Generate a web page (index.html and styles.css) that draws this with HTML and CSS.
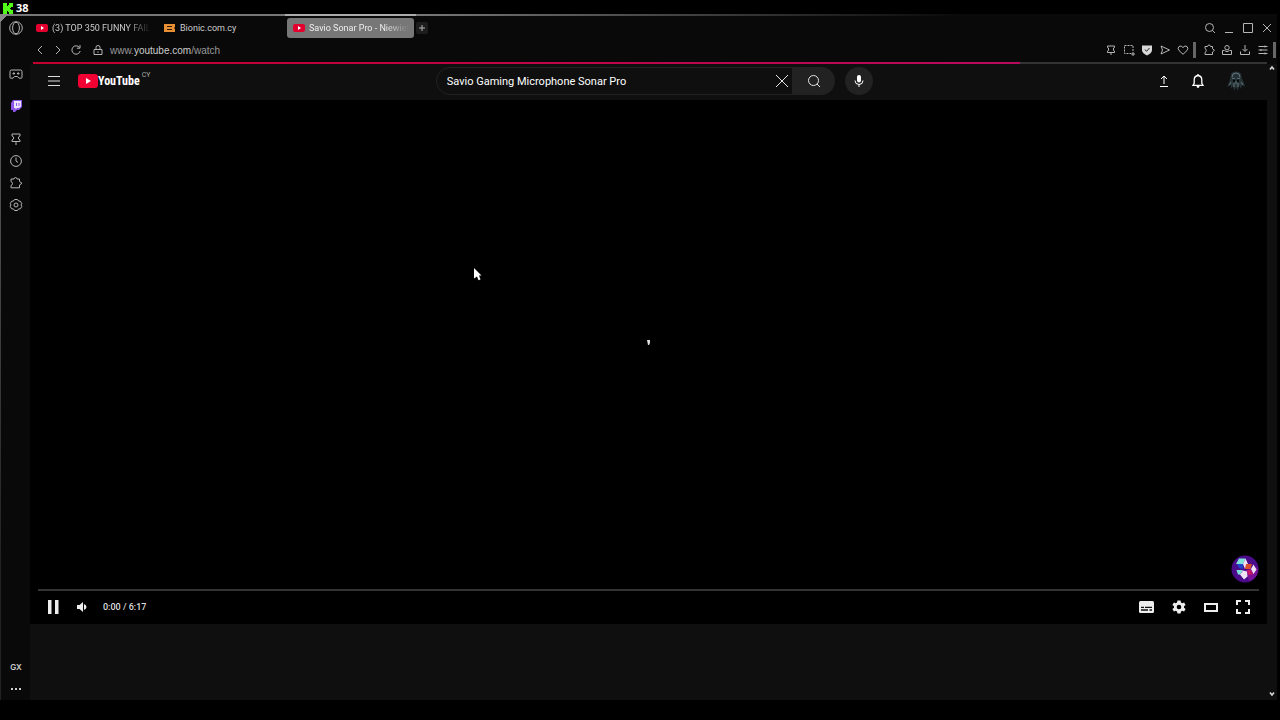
FILE: index.html
```html
<!DOCTYPE html>
<html lang="en">
<head>
  <meta charset="UTF-8">
  <meta name="viewport" content="width=device-width, initial-scale=1.0">
  <title>Savio Sonar Pro - YouTube</title>
  <link rel="stylesheet" href="styles.css">
</head>
<body>
  <div class="fps">
    <svg width="10" height="11" viewBox="0 0 10 11"><path fill="#53fc18" d="M0 0h4v3h1V2h1V0h4v4H8v1H7v1h1v1h2v4H6V9H5V8H4v3H0z"/></svg>
    <span>38</span>
  </div>

  <div class="window">
    <nav class="sidebar">
      <a href="#" class="opera" aria-label="Opera menu"><svg width="14" height="14" viewBox="0 0 14 14"><circle cx="7" cy="7" r="6.3"/><ellipse cx="7" cy="7" rx="3.4" ry="5.8"/></svg></a>
      <a href="#" class="corner" aria-label="GX Corner"><svg width="14" height="14" viewBox="0 0 14 14"><path d="M2.500 3h9q1.500 0 1.500 1.500v6q0 .7-.8.7H10L8.500 9.500h-3L4 11.200H1.800q-.8 0-.8-.7v-6Q1 3 2.500 3z"/><path d="M4 6h1.500v1H4zM8.500 6H10v1H8.500z"/></svg></a>
      <a href="#" class="twitch" aria-label="Twitch"><svg width="12" height="12" viewBox="0 0 12 12"><path fill="#8d55ea" stroke="none" d="M3 0h9v7l-3 3H7l-2 2H3v-2H1V3z"/><path fill="#eee6ff" stroke="none" d="M4 1h7v5.500L9 8H7L5.500 9.500V8H4z"/><path stroke="#8d55ea" d="M6.500 3v3M9 3v3"/></svg></a>
      <a href="#" aria-label="Pinboards"><svg width="14" height="14" viewBox="0 0 14 14"><path d="M3 2h8v2L9.500 5v2L11 8v1.500H3V8l1.500-1V5L3 4zM7 9.500V13"/></svg></a>
      <a href="#" aria-label="History"><svg width="14" height="14" viewBox="0 0 14 14"><circle cx="7" cy="7" r="5.400"/><path d="M7 3.500V7l2 1.500"/></svg></a>
      <a href="#" aria-label="Extensions"><svg width="14" height="14" viewBox="0 0 14 14"><path d="M2 3h3q.2-1.500 1.500-1.500T8 3h2.500v2.500L13 7.300 10.500 9v2.800H2V9.500q1.500-.5 1.500-2T2 5.500z"/></svg></a>
      <a href="#" aria-label="Settings"><svg width="14" height="14" viewBox="0 0 14 14"><path d="M5.500 1.500h3l1 1.500 2 .3 1.300 2.400L12 7l.8 1.300-1.300 2.400-2 .3-1 1.500h-3l-1-1.500-2-.3-1.300-2.400L2 7l-.8-1.300 1.300-2.400 2-.3z"/><circle cx="7" cy="7" r="2"/></svg></a>
      <a href="#" class="gx">GX</a>
      <a href="#" aria-label="Sidebar setup"><svg width="10" height="4" viewBox="0 0 10 4"><path fill="#ccc" stroke="none" d="M0 1h2v2H0zM4 1h2v2H4zM8 1h2v2H8z"/></svg></a>
    </nav>

    <div class="browser">
      <div class="tab-bar">
        <button class="tab">
          <svg width="12" height="8" viewBox="0 0 12 8"><rect width="12" height="8" rx="2" fill="#e3002f"/><path fill="#fff" d="M5 2l3 2-3 2z"/></svg>
          <span>(3) TOP 350 FUNNY FAIL</span>
        </button>
        <button class="tab">
          <svg width="12" height="8" viewBox="0 0 12 8"><path fill="#e89033" d="M0 0h11v3l-1 1 1 1v3H0z"/><path stroke="#2d1b08" d="M3 2.500h5M3 5.500h5"/></svg>
          <span>Bionic.com.cy</span>
        </button>
        <button class="tab active">
          <svg width="12" height="8" viewBox="0 0 12 8"><rect width="12" height="8" rx="2" fill="#e3002f"/><path fill="#fff" d="M5 2l3 2-3 2z"/></svg>
          <span>Savio Sonar Pro - Niewiel</span>
        </button>
        <button class="new-tab" aria-label="New tab"><svg width="8" height="8" viewBox="0 0 8 8"><path d="M4 1v6M1 4h6"/></svg></button>
        <div class="window-buttons">
          <button aria-label="Search tabs"><svg width="12" height="12" viewBox="0 0 12 12"><circle cx="5.500" cy="5.500" r="4"/><path d="M8.500 8.500L11 11"/></svg></button>
          <button aria-label="Minimize"><svg width="12" height="12" viewBox="0 0 12 12"><path d="M2 10.500h8"/></svg></button>
          <button aria-label="Maximize"><svg width="12" height="12" viewBox="0 0 12 12"><path d="M1.500 1.500h9v9h-9z"/></svg></button>
          <button aria-label="Close"><svg width="12" height="12" viewBox="0 0 12 12"><path d="M2 2l8 8M10 2l-8 8"/></svg></button>
        </div>
      </div>

      <div class="address-bar">
        <button aria-label="Back"><svg width="12" height="12" viewBox="0 0 12 12"><path d="M8 2L4 6l4 4"/></svg></button>
        <button aria-label="Forward"><svg width="12" height="12" viewBox="0 0 12 12"><path d="M4 2l4 4-4 4"/></svg></button>
        <button aria-label="Reload"><svg width="12" height="12" viewBox="0 0 12 12"><path d="M9.500 3.500A4.200 4.200 0 1 0 10.200 7M10 1v3.200H6.800"/></svg></button>
        <svg class="lock" width="12" height="12" viewBox="0 0 12 12"><path d="M2 5.500h8v5H2zM4 5.500V3.300q0-1.800 2-1.800t2 1.800v2.200M6 7.300v1.500"/></svg>
        <a class="url" href="#">www.<b>youtube.com</b>/watch</a>
        <div class="tools">
          <button aria-label="Pin"><svg width="12" height="12" viewBox="0 0 12 12"><path d="M2.500 2h7v1.500L8.500 4v2.500l1 .5v1.500h-7V7l1-.5V4l-1-.5zM6 8.500V11"/></svg></button>
          <button aria-label="Snapshot"><svg width="12" height="12" viewBox="0 0 12 12"><path stroke-dasharray="2 1" d="M10 7V1.500H1.500v8H8"/><path d="M10 8v4M8 10h4"/></svg></button>
          <button aria-label="Ad blocker"><svg width="12" height="12" viewBox="0 0 12 12"><path fill="#d8d8d8" stroke="none" d="M1 1.500h10V6q0 3-5 5.500Q1 9 1 6z"/><path stroke="#222" d="M4 5.500L5.500 7.300 8.500 4"/></svg></button>
          <button aria-label="My Flow"><svg width="12" height="12" viewBox="0 0 12 12"><path d="M2 2l8.500 4L2 10l1.500-4z"/></svg></button>
          <button aria-label="Bookmark"><svg width="12" height="12" viewBox="0 0 12 12"><path d="M6 10.300L2 6.500Q.2 4.200 2 2.500 4.200 1 6 3.500 7.800 1 10 2.500q1.800 1.700 0 4z"/></svg></button>
          <i></i>
          <button aria-label="Extensions"><svg width="12" height="12" viewBox="0 0 12 12"><path d="M2 2.500h2.500Q4.700 1 6 1t1.500 1.500H9.500v2.200L11.500 6.300 9.500 8v2.500H2v-2q1.300-.6 1.300-2T2 4.500z"/></svg></button>
          <button aria-label="Profile"><svg width="12" height="12" viewBox="0 0 12 12"><circle cx="6" cy="3.700" r="2.200"/><path d="M3.300 6.500H1.500v4h9v-4H8.700M3.500 6.500q2.500 2.500 5 0"/></svg></button>
          <button aria-label="Downloads"><svg width="12" height="12" viewBox="0 0 12 12"><path d="M6 1v6M3.500 5L6 7.500 8.500 5M1.500 7.500v3h9v-3"/></svg></button>
          <button aria-label="Easy setup"><svg width="12" height="12" viewBox="0 0 12 12"><path d="M1.500 2.500h9M1.500 6h9M1.500 9.500h9M8 1.500v2M4 5v2M8 8.500v2"/></svg></button>
          <i></i>
        </div>
      </div>

      <div class="load-line"></div>

      <div class="viewport">
        <main class="page">
          <header class="masthead">
            <div class="start">
              <button aria-label="Guide"><svg width="14" height="12" viewBox="0 0 14 12"><path stroke="#ddd" d="M1 1.500h12M1 6h12M1 10.500h12"/></svg></button>
              <a class="logo" href="#">
                <svg width="20" height="14" viewBox="0 0 20 14"><rect width="20" height="14" rx="3" fill="#f00033"/><path fill="#fff" d="M8 4l5 3-5 3z"/></svg>
                <span>YouTube</span><sup>CY</sup>
              </a>
            </div>
            <form class="search">
              <div class="search-box">
                <input type="text" aria-label="Search" value="Savio Gaming Microphone Sonar Pro">
                <button type="reset" aria-label="Clear"><svg width="14" height="14" viewBox="0 0 14 14"><path stroke="#e5e5e5" d="M1 1l12 12M13 1L1 13"/></svg></button>
              </div>
              <button class="search-button" type="button" aria-label="Search"><svg width="14" height="14" viewBox="0 0 14 14"><circle cx="6.500" cy="6.500" r="5" stroke="#e5e5e5"/><path stroke="#e5e5e5" d="M10 10l3 3"/></svg></button>
              <button class="mic" type="button" aria-label="Voice search"><svg width="12" height="14" viewBox="0 0 12 14"><rect x="4" y="1" width="4" height="7.500" rx="2" fill="#fff"/><path stroke="#fff" d="M2 6.500q0 4 4 4t4-4M6 10.500V13"/></svg></button>
            </form>
            <div class="end">
              <button aria-label="Create"><svg width="12" height="14" viewBox="0 0 12 14"><path stroke="#fff" d="M6 10V2M3 5l3-3 3 3M2 12.500h8"/></svg></button>
              <button aria-label="Notifications"><svg width="14" height="16" viewBox="0 0 14 16"><path stroke="#fff" stroke-width="1.300" d="M2 12.300h10l-1.200-2V7Q10.800 3 7 2.500 3.200 3 3.200 7v3.300z"/><path fill="#fff" d="M5.500 13h3q-.2 2-1.500 2t-1.500-2zM6.300 1h1.400v2H6.300z"/></svg></button>
              <button aria-label="Account"><svg width="20" height="20" viewBox="0 0 20 20"><path fill="#263236" d="M5 3q1-2.500 5-2.500T15 3l1 5 2 4 1 4-3-2-1 4-2-4-1 6-2-4-2 4-1-5-2 3v-4l-4 2 2-4 1-4z"/><path stroke="#64767b" d="M6 6q0-4 4-4t4 4M6 7l3 1M14 7l-3 1M8 12v4M12 12v4M5 11l-2 3M15 11l2 3M10 10v3"/><path fill="#06090a" d="M7 8.500h2V11H7zM11 8.500h2V11h-2z"/></svg></button>
            </div>
          </header>

          <section class="player">
            <svg class="spinner" width="4" height="6" viewBox="0 0 4 6"><path fill="#ddd" d="M0 0h3v3L2 5H1z"/></svg>
            <div class="channel">
              <svg width="28" height="28" viewBox="0 0 28 28"><circle cx="14" cy="14" r="13.500" fill="#4b0c8c"/><path fill="#78109a" d="M15 15l12-3q1 11-9 14z"/><path fill="#7fe3dc" d="M8 3.500h6.500L12 9H5zM5.500 15H12l-3 4.500H7z"/><path fill="#2143c8" d="M6 9h6v5L8 13z"/><path fill="#eee4f5" d="M14.500 3.500L17 9l-3 5-2-5zM9 19.500l3-4 4 1 .5 5-3.500 3zM22.500 9.500l3 5-3 4.500-2.500-5z"/><path fill="#d9502d" d="M15 9h6l-1.500 5H14z"/><path fill="#c51568" d="M16 15h4l2 4.500-5 .5z"/></svg>
            </div>
            <progress value="0" max="377" aria-label="Seek"></progress>
            <div class="controls">
              <button aria-label="Pause"><svg width="12" height="14" viewBox="0 0 12 14"><path fill="#eee" d="M1 0h3.500v14H1zM8 0h3.500v14H8z"/></svg></button>
              <button aria-label="Mute"><svg width="12" height="12" viewBox="0 0 12 12"><path fill="#eee" d="M1 4h2.500L7 1v10L3.500 8H1zM8 3q2.500 1 2.500 3T8 9z"/></svg></button>
              <span class="time">0:00 / 6:17</span>
              <div class="right">
                <button aria-label="Subtitles"><svg width="16" height="12" viewBox="0 0 16 12"><rect width="15" height="12" rx="1.500" fill="#eee"/><path stroke="#111" stroke-width="1.300" d="M2 6.300h3M6 6.300h7M2 9h7M10.500 9H13"/></svg></button>
                <button aria-label="Settings"><svg width="14" height="14" viewBox="0 0 14 14"><path fill="#eee" fill-rule="evenodd" d="M5.500.5h3L9 2.500l1.200.7 1.900-.7 1.500 2.500L12 6.300v1.400L13.600 9l-1.500 2.500-1.900-.7-1.200.7-.5 2h-3l-.5-2-1.200-.7-1.900.7L.4 9 2 7.700V6.300L.4 5l1.500-2.500 1.900.7L5 2.500zM7 4.700a2.300 2.300 0 1 0 0 4.600 2.300 2.300 0 0 0 0-4.600z"/></svg></button>
                <button aria-label="Theater mode"><svg width="14" height="10" viewBox="0 0 14 10"><path stroke="#eee" stroke-width="2" d="M1 2h12v7H1z"/></svg></button>
                <button aria-label="Full screen"><svg width="14" height="14" viewBox="0 0 14 14"><path stroke="#eee" stroke-width="2" d="M1 5V1h4M9 1h4v4M13 9v4H9M5 13H1V9"/></svg></button>
              </div>
            </div>
          </section>
        </main>
        <div class="scrollbar">
          <svg width="6" height="6" viewBox="0 0 6 6"><path stroke="#ddd" stroke-width="1.500" d="M1 4.500l2-2.500 2 2.500"/></svg>
          <svg width="6" height="6" viewBox="0 0 6 6"><path stroke="#ddd" stroke-width="1.500" d="M1 1.500L3 4l2-2.500"/></svg>
        </div>
      </div>
    </div>
  </div>

  <svg class="cursor" width="8" height="13" viewBox="0 0 8 13"><path fill="#fff" d="M0 0l7.500 7.500H5l1.500 4-2 .7L3 8.500l-3 2z"/></svg>
</body>
</html>
```

FILE: styles.css
```css
* {
  box-sizing: border-box;
}

body {
  margin: 0;
  padding-bottom: 20px;
  height: 100vh;
  display: flex;
  flex-direction: column;
  background: #000;
  color: #ccc;
  font-family: Roboto, "Liberation Sans", sans-serif;
  overflow: hidden;
}

svg {
  display: block;
  flex: none;
  fill: none;
}

button {
  display: flex;
  align-items: center;
  justify-content: center;
  margin: 0;
  padding: 0;
  border: none;
  background: none;
  color: inherit;
  font: inherit;
}

a {
  color: inherit;
  text-decoration: none;
}

.fps {
  display: flex;
  align-items: center;
  gap: 3px;
  height: 14px;
  padding: 2px 0 0 3px;
  color: #fff;
  font: bold 11px/12px "Open Sans", sans-serif;
}

/* the frame glows grey at the top left and fades out */
.window {
  flex: 1;
  display: flex;
  min-height: 0;
  margin-right: 3px;
  padding-left: 1px;
  background:
    linear-gradient(135deg, #888 6px, transparent 6px),
    linear-gradient(90deg, #777 0, #777 33%, #0a0a0a 75%) top / 100% 2px no-repeat,
    linear-gradient(#666, #222 80%) left / 1px 100% no-repeat,
    #090909;
}

/* opera sidebar */
.sidebar {
  display: flex;
  flex-direction: column;
  align-items: center;
  width: 29px;
  padding: 3px 0 0 1px;
}

.sidebar a {
  display: flex;
  align-items: center;
  justify-content: center;
  width: 22px;
  height: 22px;
}

.sidebar svg,
.tab-bar svg,
.address-bar svg {
  stroke: #b5b5b5;
}

.sidebar .corner {
  margin-top: 24px;
}

.sidebar .twitch {
  margin: 10px 0 11px;
}

.sidebar .gx {
  margin-top: auto;
  font: 600 8px Inter, sans-serif;
}

.browser {
  flex: 1;
  display: flex;
  flex-direction: column;
  min-width: 0;
}

/* tabs */
.tab-bar {
  display: flex;
  align-items: center;
  height: 26px;
  padding: 2px 0 0 1px;
}

.tab {
  position: relative;
  justify-content: flex-start;
  gap: 4px;
  width: 128px;
  height: 20px;
  padding: 0 6px 0 5px;
  border-radius: 3px;
  font-size: 9px;
}

.tab svg {
  stroke: none;
}

.tab span {
  white-space: nowrap;
  -webkit-mask-image: linear-gradient(90deg, #000 75%, transparent);
  mask-image: linear-gradient(90deg, #000 75%, transparent);
}

.tab:nth-child(2) span {
  -webkit-mask-image: none;
  mask-image: none;
}

.tab.active {
  width: 127px;
  padding-left: 6px;
  background: #777;
  color: #eee;
}

.tab.active::before {
  content: "";
  position: absolute;
  top: -4px;
  left: -2px;
  right: -2px;
  height: 2px;
  background: #aaa;
}

.new-tab {
  width: 12px;
  height: 12px;
  margin-left: 2px;
  border-radius: 2px;
  background: #1d1d1d;
}

.window-buttons {
  display: flex;
  gap: 7px;
  margin-left: auto;
  padding-right: 4px;
}

/* address bar */
.address-bar {
  display: flex;
  align-items: center;
  gap: 6px;
  height: 22px;
  padding: 0 0 2px 4px;
}

.lock {
  margin-left: 4px;
}

.url {
  color: #999;
  font: 10px "Liberation Sans", sans-serif;
}

.url b {
  color: #ccc;
  font-weight: 400;
}

.tools {
  display: flex;
  align-items: center;
  gap: 6px;
  margin-left: auto;
}

.tools i {
  width: 3px;
  height: 16px;
  margin: 0 1px 0 -2px;
  background: #666;
}

.load-line {
  height: 2px;
  margin: 0 10px 0 3px;
  background: linear-gradient(90deg, #c4002f, #b80a5e) left / 80% 100% no-repeat #333;
}

.viewport {
  flex: 1;
  display: flex;
  min-height: 0;
}

.page {
  flex: 1;
  display: flex;
  flex-direction: column;
  min-width: 0;
  padding-bottom: 76px;
  background: #0f0f0f;
}

.scrollbar {
  display: flex;
  flex-direction: column;
  align-items: center;
  justify-content: space-between;
  width: 10px;
  padding: 1px 0 3px;
  background: #0f0f0f;
}

/* youtube masthead */
.masthead {
  display: flex;
  align-items: center;
  justify-content: space-between;
  height: 36px;
  padding: 0 21px 2px 17px;
}

.start,
.logo,
.end {
  display: flex;
  align-items: center;
}

.start {
  gap: 17px;
}

.logo span {
  color: #fff;
  font: bold 12px/14px "Roboto Condensed", Roboto, sans-serif;
}

.logo sup {
  margin: 0 0 12px 2px;
  color: #aaa;
  font: 7px/8px Roboto, sans-serif;
}

.search {
  display: flex;
  height: 28px;
}

.search-box {
  display: flex;
  width: 357px;
  padding-right: 3px;
  border: 1px solid #222;
  border-radius: 14px 0 0 14px;
  background: #0f0f0f;
}

.search-box input {
  flex: 1;
  min-width: 0;
  padding: 0 0 0 10px;
  border: none;
  outline: none;
  background: none;
  color: #fff;
  font: 11px Roboto, sans-serif;
}

.search-button {
  width: 42px;
  border-radius: 0 14px 14px 0;
  background: #222;
}

.mic {
  width: 28px;
  margin-left: 10px;
  border-radius: 50%;
  background: #222;
}

.end {
  gap: 21px;
}

/* player */
.player {
  position: relative;
  flex: 1;
  display: flex;
  flex-direction: column;
  justify-content: flex-end;
  padding: 0 8px;
  background: #000;
}

.spinner {
  position: absolute;
  top: 46%;
  left: 50%;
  transform: translate(-50%, -1px);
}

.channel {
  align-self: flex-end;
  margin-bottom: 6px;
}

progress {
  width: 100%;
  height: 2px;
  border: none;
  appearance: none;
  background: #333;
}

progress::-webkit-progress-bar {
  background: #333;
}

.controls {
  display: flex;
  align-items: center;
  height: 33px;
  padding: 0 8px 2px 9px;
}

.controls button + button {
  margin-left: 17px;
}

.controls .time {
  margin-left: 15px;
  color: #ddd;
  font: 500 9px Roboto, sans-serif;
}

.controls .right {
  display: flex;
  gap: 16px;
  margin-left: auto;
}

.controls .right button {
  width: 16px;
  margin: 0;
}

.cursor {
  position: absolute;
  top: 268px;
  left: 474px;
}
```
